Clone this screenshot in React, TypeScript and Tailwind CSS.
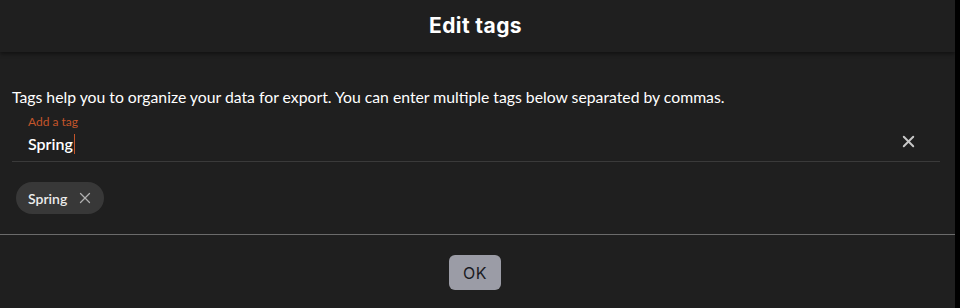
import { X } from 'lucide-react'

export default function App() {
  return (
    <div className="w-[960px] h-[308px] bg-black flex overflow-hidden">
      <div className="w-[955px] h-full bg-[#1f1f1f] rounded-tr-[4px] flex flex-col font-['Lato',sans-serif]">
        {/* Header */}
        <div className="h-[52px] shrink-0 flex items-center justify-center bg-[#1f1f1f] shadow-[0_2px_4px_rgba(0,0,0,0.45)] relative z-10">
          <h2 className="font-['Inter',sans-serif] font-bold text-[21px] text-white tracking-[0.4px] mr-[4px]">Edit tags</h2>
        </div>

        {/* Body */}
        <div className="pt-[33px] px-[12px]">
          <p className="text-[15.75px] leading-[24px] text-white">
            Tags help you to organize your data for export. You can enter multiple tags below separated by commas.
          </p>

          <div className="mt-[5px] w-[928px] border-b border-[#3a3a3a] pl-[16px] pr-[22px] pb-[5px] flex items-end">
            <div className="flex-1 flex flex-col">
              <label className="text-[12px] leading-[16px] text-[#c4552a]">Add a tag</label>
              <div className="mt-[2px] text-[16px] leading-[24px] text-white font-semibold flex items-center">
                Spring
                <span className="w-px h-[20px] bg-[#c4552a] ml-px" />
              </div>
            </div>
            <button className="mb-[5px] text-[#c8c8c8]">
              <X size={19} strokeWidth={2.4} />
            </button>
          </div>

          <div className="mt-[20px] flex pl-[4px]">
            <span className="h-[32px] pl-[12px] pr-[10px] rounded-full bg-[#383838] flex items-center gap-[9px] text-[14px] text-[#ececec] font-semibold">
              Spring
              <X size={18} strokeWidth={1.7} className="text-[#b0b0b0]" />
            </span>
          </div>
        </div>

        {/* Footer */}
        <div className="mt-[20px] border-t border-[#6b6b6b] flex justify-center pt-[20px] pr-[5px]">
          <button className="w-[52px] h-[35px] rounded-[6px] bg-[#9b9ca6] text-[#1a1a22] font-['Inter',sans-serif] text-[16px] tracking-[0.5px]">
            OK
          </button>
        </div>
      </div>
    </div>
  )
}
